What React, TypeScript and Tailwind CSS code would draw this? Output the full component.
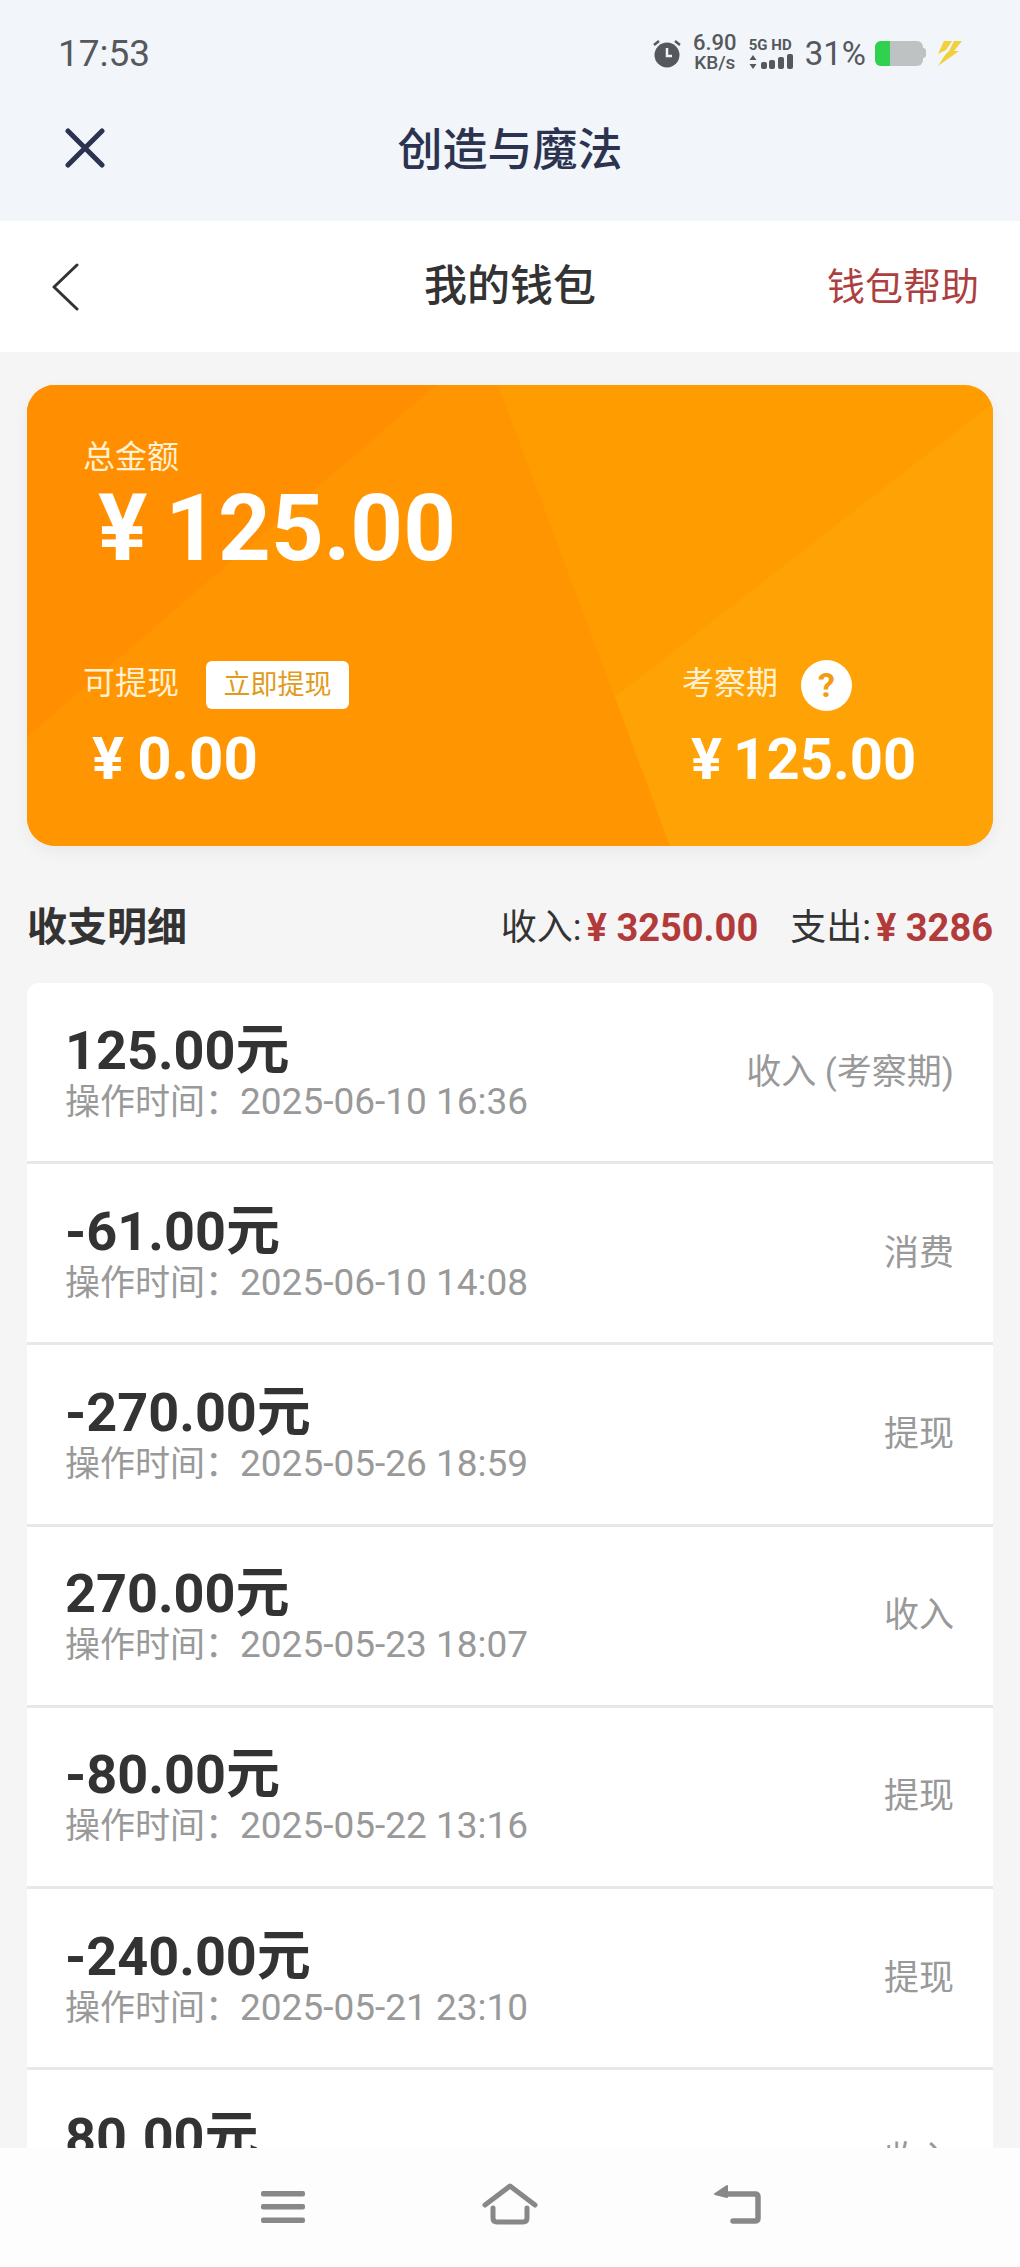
import React from 'react';

const FONT = "font-['Roboto','Noto_Sans_CJK_SC',sans-serif]";

interface Txn {
  amount: string;
  time: string;
  kind: string;
}

const txns: Txn[] = [
  { amount: '125.00', time: '2025-06-10 16:36', kind: '收入 (考察期)' },
  { amount: '-61.00', time: '2025-06-10 14:08', kind: '消费' },
  { amount: '-270.00', time: '2025-05-26 18:59', kind: '提现' },
  { amount: '270.00', time: '2025-05-23 18:07', kind: '收入' },
  { amount: '-80.00', time: '2025-05-22 13:16', kind: '提现' },
  { amount: '-240.00', time: '2025-05-21 23:10', kind: '提现' },
  { amount: '80.00', time: '2025-05-21 10:32', kind: '收入' },
];

const StatusIcons = () => (
  <div className="flex items-center text-[#55585c]">
    {/* alarm clock */}
    <svg width="30" height="30" viewBox="0 0 30 30" className="mr-[10px]">
      <circle cx="15" cy="17" r="12.5" fill="#55585c" />
      <path d="M15 10v8h5" fill="none" stroke="#f2f5f9" strokeWidth="2.5" />
      <path d="M2 7l5-4M28 7l-5-4" fill="none" stroke="#55585c" strokeWidth="2.5" />
    </svg>
    <div className="flex flex-col items-center w-[46px] font-medium mr-[11px]">
      <span className="text-[22px] leading-[20px]">6.90</span>
      <span className="text-[19px] leading-[20px]">KB/s</span>
    </div>
    <div className="flex flex-col w-[46px] mr-[10px]">
      <span className="text-[15px] leading-[18px] font-bold whitespace-nowrap">5G HD</span>
      {/* signal bars */}
      <svg width="46" height="16" viewBox="0 0 46 16" fill="#55585c">
        <path d="M4 1l3.5 5h-7zM4 15l3.5-5h-7z" />
        <rect x="12" y="8" width="6" height="7" rx="2" />
        <rect x="20" y="6" width="6" height="9" rx="2" />
        <rect x="29" y="3" width="6" height="12" rx="2" />
        <rect x="38" y="0" width="6" height="15" rx="2" />
      </svg>
    </div>
    <span className="text-[33px] leading-none mr-[9px]">31%</span>
    {/* battery */}
    <div className="flex items-center mr-[9px]">
      <div className="w-[48px] h-[25px] bg-[#bfc2c3] rounded-[6px] overflow-hidden">
        <div className="w-[15px] h-full bg-[#2fd14f]" />
      </div>
      <div className="w-[3px] h-[10px] bg-[#bfc2c3] rounded-r-sm" />
    </div>
    {/* charging bolt */}
    <svg width="27" height="26" viewBox="0 0 27 26" fill="#f0d03c">
      <path d="M9 1h8L11 10l-4 2-4 2zM19 1h8l-8 10h5L3 26l7-11 4-4z" />
    </svg>
  </div>
);

const App = () => {
  return (
    <div className={`h-[2267px] flex flex-col overflow-hidden bg-[#f5f5f5] ${FONT}`}>
      {/* system bar + webview title */}
      <header className="h-[221px] bg-[#f2f5f9] shrink-0">
        <div className="h-[106px] pl-[58px] pr-[58px] flex items-center justify-between">
          <span className="text-[37px] leading-none text-[#55585c]">17:53</span>
          <StatusIcons />
        </div>
        <div className="h-[88px] px-[65px] grid grid-cols-[1fr_auto_1fr] items-center">
          <svg width="40" height="40" viewBox="0 0 40 40" fill="none" stroke="#2b3350" strokeWidth="5" strokeLinecap="round" className="-mt-[4px]">
            <path d="M3 3l34 34M37 3L3 37" />
          </svg>
          <span className="text-[45px] leading-none font-medium text-[#2b3350]">创造与魔法</span>
          <span />
        </div>
      </header>

      <nav className="h-[131px] bg-white shrink-0 px-[41px] grid grid-cols-[1fr_auto_1fr] items-center">
        <svg width="27" height="48" viewBox="0 0 27 48" fill="none" stroke="#333" strokeWidth="3" strokeLinecap="round" strokeLinejoin="round" className="ml-[11px]">
          <path d="M25 2L2 24l23 22" />
        </svg>
        <span className="text-[43px] leading-none font-medium text-[#333]">我的钱包</span>
        <span className="justify-self-end text-[38px] leading-none text-[#ad3f3f]">钱包帮助</span>
      </nav>

      <main className="flex-1 min-h-0 overflow-hidden px-[27px] pt-[33px]">
        {/* balance card */}
        <section className="relative h-[461px] rounded-[28px] overflow-hidden bg-[#ff9c00] shadow-[0_6px_16px_rgba(0,0,0,0.05)]">
          <svg className="absolute inset-0 w-full h-full" viewBox="0 0 966 461" preserveAspectRatio="none">
            <polygon points="0,0 471,0 643,461 0,461" fill="#ff9500" />
            <polygon points="0,0 409,0 0,352" fill="#ff8e00" />
            <polygon points="966,18 966,461 643,461 588,312" fill="#ffa205" />
          </svg>
          <div className="relative h-full pl-[56px] pr-[58px] pt-[55px] text-white">
            <div className="text-[32px] leading-[34px] text-[#fff1d2]">总金额</div>
            <div className="mt-[2px] ml-[15px] text-[92px] leading-[106px] font-bold">
              <span className="mr-[18px]">¥</span>125.00
            </div>
            <div className="mt-[78px] flex justify-between">
              <div>
                <div className="flex items-center h-[50px]">
                  <span className="text-[32px] leading-none text-[#fff1d2] -mt-[4px]">可提现</span>
                  <span className="ml-[27px] h-[48px] w-[143px] bg-white rounded-[6px] flex items-center justify-center text-[27px] text-[#e29a1c]">
                    立即提现
                  </span>
                </div>
                <div className="mt-[16px] ml-[9px] text-[60px] leading-[66px] font-bold">
                  <span className="mr-[13px]">¥</span>0.00
                </div>
              </div>
              <div className="w-[259px] -mr-[6px]">
                <div className="flex items-center h-[50px]">
                  <span className="text-[32px] leading-none text-[#fff1d2] -mt-[4px]">考察期</span>
                  <span className="ml-[23px] w-[51px] h-[51px] rounded-full bg-white flex items-center justify-center text-[34px] font-bold text-[#f39c12]">
                    ?
                  </span>
                </div>
                <div className="mt-[16px] ml-[9px] text-[58px] leading-[66px] font-bold">
                  <span className="mr-[11px]">¥</span>125.00
                </div>
              </div>
            </div>
          </div>
        </section>

        <div className="mt-[57px] h-[50px] flex items-center justify-between">
          <h2 className="text-[40px] leading-none font-bold text-[#333]">收支明细</h2>
          <div className="flex items-center text-[36px] leading-none text-[#333]">
            <span>收入:</span>
            <span className="ml-[5px] font-bold text-[#b33a3a] text-[38px]">¥ 3250.00</span>
            <span className="ml-[32px]">支出:</span>
            <span className="ml-[5px] font-bold text-[#b33a3a] text-[38px]">¥ 3286</span>
          </div>
        </div>

        {/* transactions */}
        <ul className="mt-[30px] rounded-t-[12px] overflow-hidden bg-white">
          {txns.map((t) => (
            <li
              key={t.time}
              className="h-[181.2px] border-b-[3px] border-[#e8e8e8] pl-[38px] pr-[39px] flex items-center justify-between"
            >
              <div className="pt-[15px]">
                <div className="text-[54px] leading-[50px] font-bold text-[#333]">{t.amount}元</div>
                <div className="leading-[51px] text-[#999] whitespace-nowrap">
                  <span className="text-[35px]">操作时间：</span>
                  <span className="text-[37px]">{t.time}</span>
                </div>
              </div>
              <span className="text-[35px] leading-none text-[#999]">{t.kind}</span>
            </li>
          ))}
        </ul>
      </main>

      {/* system navigation */}
      <footer className="h-[119px] shrink-0 bg-[#fdfdfd] flex justify-center pt-[42px]">
        <div className="w-[227px] flex justify-center">
          <svg width="44" height="34" viewBox="0 0 44 34" fill="#888">
            <rect x="0" y="1" width="44" height="5.5" rx="2" />
            <rect x="0" y="14" width="44" height="5.5" rx="2" />
            <rect x="0" y="27.5" width="44" height="5.5" rx="2" />
          </svg>
        </div>
        <div className="w-[227px] flex justify-center">
          <svg width="56" height="42" viewBox="0 0 56 42" fill="none" stroke="#888" strokeWidth="5" strokeLinecap="round" strokeLinejoin="round" className="-mt-[7px]">
            <path d="M3 22L28 3l25 19M11 25v10q0 4 4 4h26q4 0 4-4V25" />
          </svg>
        </div>
        <div className="w-[227px] flex justify-center">
          <svg width="48" height="40" viewBox="0 0 48 40" fill="none" stroke="#888" strokeWidth="5.5" strokeLinejoin="round" strokeLinecap="round" className="-mt-[6px]">
            <path d="M14 10h28q3 0 3 3v21q0 3-3 3H20" />
            <path d="M14 2L2 10l12 3z" fill="#888" strokeWidth="2" />
          </svg>
        </div>
      </footer>
    </div>
  );
};

export default App;
